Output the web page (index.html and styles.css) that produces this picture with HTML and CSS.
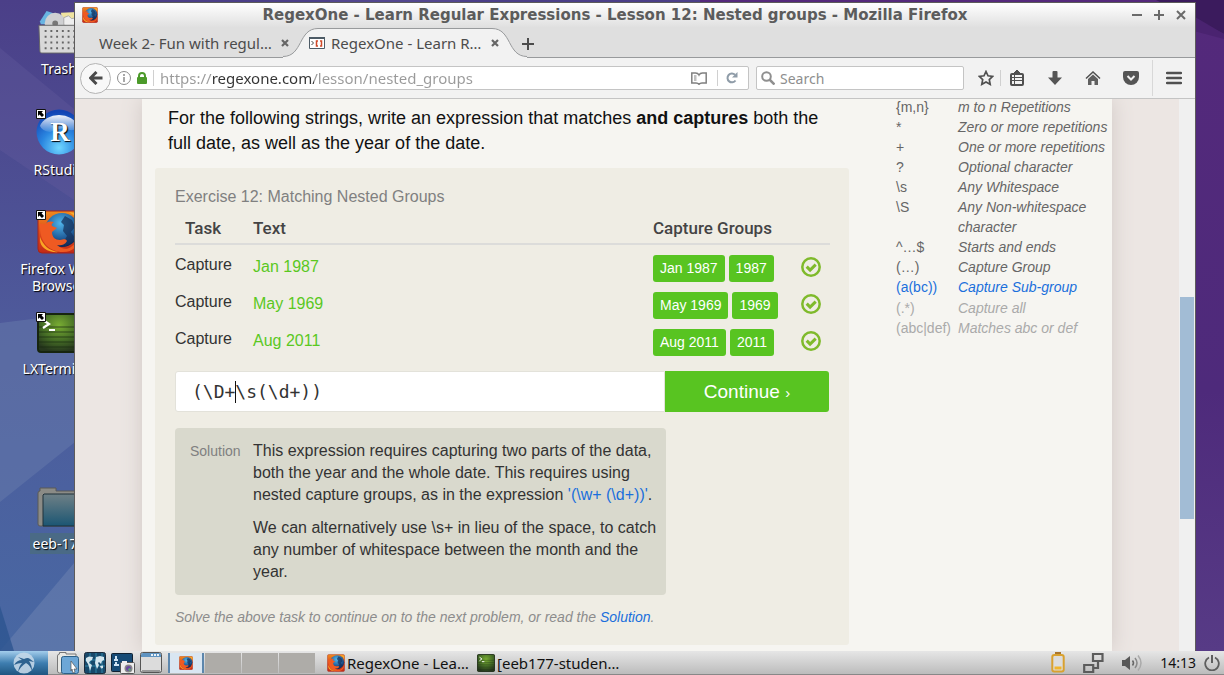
FILE: index.html
```html
<!DOCTYPE html>
<html lang="en">
<head>
<meta charset="utf-8">
<title>RegexOne - Learn Regular Expressions - Lesson 12: Nested groups</title>
<link rel="stylesheet" href="styles.css">
</head>
<body>
<svg class="defs" aria-hidden="true">
  <defs>
    <radialGradient id="globe" cx=".45" cy=".3" r=".7"><stop offset="0" stop-color="#4fb4ea"/><stop offset=".6" stop-color="#23629f"/><stop offset="1" stop-color="#0e2450"/></radialGradient>
    <linearGradient id="fxbg" x1="0" y1="0" x2="0" y2="1"><stop offset="0" stop-color="#f08a1d"/><stop offset=".5" stop-color="#dd4b1b"/><stop offset="1" stop-color="#c22a17"/></linearGradient>
    <radialGradient id="term" cx=".5" cy=".3" r=".7"><stop offset="0" stop-color="#79ad33"/><stop offset=".6" stop-color="#436a25"/><stop offset="1" stop-color="#26361d"/></radialGradient>
    <radialGradient id="rblue" cx=".5" cy=".85" r=".8"><stop offset="0" stop-color="#6fd6ff"/><stop offset=".5" stop-color="#2a86e0"/><stop offset="1" stop-color="#1244b4"/></radialGradient>
    <linearGradient id="gloss" x1="0" y1="0" x2="0" y2="1"><stop offset="0" stop-color="#fff" stop-opacity=".95"/><stop offset="1" stop-color="#fff" stop-opacity=".1"/></linearGradient>
    <linearGradient id="folder" x1="0" y1="0" x2="0" y2="1"><stop offset="0" stop-color="#6f8086"/><stop offset="1" stop-color="#1b5673"/></linearGradient>
    <linearGradient id="wall" x1="0" y1="0" x2="0" y2="1"><stop offset="0" stop-color="#4b3f88"/><stop offset=".5" stop-color="#4e5a9b"/><stop offset="1" stop-color="#4868a3"/></linearGradient>
    <linearGradient id="wall2" x1="0" y1="0" x2="0" y2="1"><stop offset="0" stop-color="#54297b"/><stop offset=".6" stop-color="#4e2a7b"/><stop offset="1" stop-color="#573b86"/></linearGradient>
    <symbol id="firefox" viewBox="0 0 44 44">
      <rect x="1" y="1" width="42" height="42" rx="4" fill="url(#fxbg)" stroke="#a5251a"/>
      <circle cx="25" cy="20" r="17" fill="url(#globe)"/>
      <path d="M28 6l7 4 3 7-4 5 3 5-4 7-5 2-1-5 3-5-4-5 1-6-3-3z" fill="#17335e" opacity=".75"/>
      <path d="M3 14c2-1 3 1 5 0 3-3 6-3 9-2-2 1-3 3-2 4l5 2-5 4c0 5 3 8 8 8 3 0 5-2 7 1-2 4-6 5-10 4 4 4 10 5 14 2 4-3 7-6 8-11 0 10-6 16-16 16-13 0-24-9-23-28z" fill="#ef5a22"/>
      <path d="M3 27c3 8 9 14 19 15-10 1-19-4-19-12z" fill="#f9a524"/>
      <path d="M32 2c5 3 9 7 10 12V4z" fill="#f8ad2c"/>
    </symbol>
    <symbol id="terminal" viewBox="0 0 44 40">
      <rect x="1" y="1" width="42" height="38" rx="3" fill="url(#term)" stroke="#17250f" stroke-width="2"/>
      <path d="M2 14h40M2 19h40M2 24h40M2 29h40M2 34h40" stroke="#182a10" stroke-width="2" opacity=".35"/>
      <path d="M6 7l6 4-6 4M12 17h6" stroke="#fff" stroke-width="2.2" fill="none"/>
    </symbol>
    <symbol id="shortcut" viewBox="0 0 10 10"><path d="M.5.5h9v9h-9z" fill="#fff" stroke="#111"/><path d="M2 2h5L5.600 3.400 8 6 6 8 3.500 5.500 2 7z" fill="#000"/></symbol>
    <symbol id="check" viewBox="0 0 20 20"><circle cx="10" cy="10" r="8.700" fill="none" stroke="#7fba2b" stroke-width="2.500"/><path d="M5.700 9.600l3.400 3.500 5.600-5.500" fill="none" stroke="#7fba2b" stroke-width="3"/></symbol>
    <symbol id="close" viewBox="0 0 8 8"><path d="M1 1l6 6M7 1L1 7" stroke="#666" stroke-width="2.200"/></symbol>
  </defs>
</svg>

<div class="screen">
  <main class="workspace">
    <svg class="wallpaper" viewBox="0 0 1224 651" preserveAspectRatio="none" aria-hidden="true">
      <path d="M0 0h700v651H0z" fill="url(#wall)"/>
      <path d="M700 0h524v651H700z" fill="url(#wall2)"/>
      <path d="M0 48l80 66v90L0 150z" fill="#655c9e" opacity=".35"/>
      <path d="M0 323l80-10v125L0 502z" fill="#6b7fae" opacity=".45"/>
      <path d="M80 556v95H0z" fill="#6b82b0" opacity=".55"/>
      <path d="M0 606l14 45H0z" fill="#2d5590" opacity=".8"/>
      <path d="M1156 0h68v34z" fill="#3b1b5d"/>
      <path d="M1190 30l34 9v-5l-34-20z" fill="#4a2370"/>
      <path d="M330 0h130v3H330z" fill="#53478f"/>
    </svg>

    <a class="shortcut trash" href="#trash">
      <svg width="44" height="44" viewBox="0 0 44 46"><path d="M2 12L9 1l12 4 3 10H3z" fill="#68b4e2"/><path d="M24 3l17-1v14H26z" fill="#efe3a0"/><circle cx="18" cy="14" r="11" fill="#cfd0d2"/><circle cx="18" cy="14" r="3" fill="#777"/><path d="M27 8l5-2 3 3 6-1v10l-6-1-3 3-5-5z" fill="#eee" stroke="#aaa"/><path d="M1 16h42l-1 27q0 2-2 2H4q-2 0-2-2z" fill="#d9d9d9" stroke="#666"/><path d="M7 22h34M7 28h34M7 34h34M7 40h34" stroke="#666" stroke-width="2" stroke-dasharray="2 4"/></svg>
      <span class="label">Trash</span>
    </a>
    <a class="shortcut rstudio" href="#rstudio">
      <svg width="46" height="46" viewBox="0 0 46 46"><circle cx="23" cy="23" r="22.500" fill="url(#rblue)"/><path d="M4 17a20 16 0 0138 0q-3 5-8 4-10-4-20 2-8-1-10-6z" fill="url(#gloss)"/><text class="r-mark" x="24" y="32" text-anchor="middle">R</text></svg>
      <svg class="corner" width="10" height="10"><use href="#shortcut"/></svg>
      <span class="label">RStudio</span>
    </a>
    <a class="shortcut ff" href="#firefox">
      <svg width="44" height="44"><use href="#firefox"/></svg>
      <svg class="corner" width="10" height="10"><use href="#shortcut"/></svg>
      <span class="label">Firefox Web Browser</span>
    </a>
    <a class="shortcut lx" href="#lxterminal">
      <svg width="44" height="42"><use href="#terminal"/></svg>
      <svg class="corner" width="10" height="10"><use href="#shortcut"/></svg>
      <span class="label">LXTerminal</span>
    </a>
    <a class="shortcut dir" href="#eeb-177">
      <svg width="44" height="40" viewBox="0 0 44 40"><path d="M1 6q0-2 2-2V1h16v3h24v35H3q-2 0-2-2z" fill="#8b8b86" stroke="#5b5a57"/><path d="M7 7h36v32H6V8z" fill="url(#folder)" stroke="#1f303a"/></svg>
      <span class="label chosen">eeb-177</span>
    </a>

    <section class="window">
      <header class="titlebar">
        <svg class="app-icon" width="16" height="16"><use href="#firefox"/></svg>
        <h1 class="win-title">RegexOne - Learn Regular Expressions - Lesson 12: Nested groups - Mozilla Firefox</h1>
        <div class="win-buttons">
          <button class="plain" aria-label="Minimize"><svg width="10" height="10"><path d="M0 5h10" stroke="#6a6a6a" stroke-width="2"/></svg></button>
          <button class="plain" aria-label="Maximize"><svg width="10" height="10"><path d="M0 5h10M5 0v10" stroke="#6a6a6a" stroke-width="2"/></svg></button>
          <button class="plain" aria-label="Close window"><svg width="10" height="10"><path d="M1 1l8 8M9 1L1 9" stroke="#6a6a6a" stroke-width="2"/></svg></button>
        </div>
      </header>

      <nav class="tabs">
        <div class="tab">
          <a class="tab-name" href="#week2">Week 2- Fun with regul…</a>
          <button class="plain" aria-label="Close tab"><svg width="8" height="8"><use href="#close"/></svg></button>
        </div>
        <div class="tab active">
          <svg class="tab-shape" viewBox="0 0 244 30" preserveAspectRatio="none"><path d="M0 30V28.500C20 28.500 15 .5 35 .5H209C229 .5 224 28.500 244 28.500V30z" fill="#f2f2f2"/><path d="M0 28.500C20 28.500 15 .5 35 .5H209C229 .5 224 28.500 244 28.500" fill="none" stroke="#989a9c"/></svg>
          <svg class="favicon" width="16" height="12" viewBox="0 0 16 12"><path d="M.5.5h15v11H.5z" fill="#fff" stroke="#4d5b66"/><path d="M0 1h16" stroke="#4d5b66" stroke-width="2"/><path d="M2.500 4l2 2-2 2" fill="none" stroke="#444"/><path d="M9 4H7.500v5H9M11 4h1.500v5H11" fill="none" stroke="#cf4a2a" stroke-width="1.500"/></svg>
          <a class="tab-name" href="#regexone">RegexOne - Learn R…</a>
          <button class="plain" aria-label="Close tab"><svg width="8" height="8"><use href="#close"/></svg></button>
        </div>
        <button class="plain new-tab" aria-label="New tab"><svg width="12" height="12"><path d="M0 6h12M6 0v12" stroke="#4c4c4c" stroke-width="2"/></svg></button>
      </nav>

      <div class="toolbar">
        <button class="back" aria-label="Back"><svg width="14" height="14" viewBox="0 0 14 14"><path d="M13.500 7H2M7.500 1L1.500 7l6 6" fill="none" stroke="#4a4a4a" stroke-width="3"/></svg></button>
        <div class="urlbar">
          <svg width="14" height="14" viewBox="0 0 14 14"><circle cx="7" cy="7" r="6.500" fill="none" stroke="#8c8c8c"/><path d="M7 6v5M7 3v2" stroke="#8c8c8c" stroke-width="1.500"/></svg>
          <svg width="10" height="12" viewBox="0 0 10 12"><path d="M2 6V4a3 3 0 016 0v2" fill="none" stroke="#4c9a2a" stroke-width="2"/><rect y="5" width="10" height="7" rx="1" fill="#4c9a2a"/></svg>
          <i class="rule"></i>
          <input class="url" type="text" aria-label="Address" value="https://regexone.com/lesson/nested_groups">
          <button class="plain" aria-label="Reader view"><svg width="16" height="13" viewBox="0 0 16 13"><path d="M8 3Q7 1 4.500 1H.8v10H5q2 0 3 1.300Q9 11 11 11h4.200V1h-3.700Q9 1 8 3z" fill="none" stroke="#808080" stroke-width="1.500"/><path d="M3 4h2.500M3 6h2.500M3 8h2.500" stroke="#808080"/></svg></button>
          <i class="rule"></i>
          <button class="plain" aria-label="Reload"><svg width="12" height="12" viewBox="0 0 12 12"><path d="M9.500 8.500A4.400 4.400 0 119 2.800" fill="none" stroke="#8f9ca8" stroke-width="2"/><path d="M11.500 0v5.500H6z" fill="#8f9ca8"/></svg></button>
        </div>
        <div class="searchbar">
          <svg width="14" height="14" viewBox="0 0 14 14"><circle cx="5.500" cy="5.500" r="4.300" fill="none" stroke="#8f8f8f" stroke-width="2"/><path d="M8.500 8.500l5 5" stroke="#8f8f8f" stroke-width="2.500"/></svg>
          <input class="search" type="search" aria-label="Search" placeholder="Search">
        </div>
        <div class="tools">
          <button class="plain star" aria-label="Bookmark this page"><svg width="16" height="16" viewBox="0 0 16 16"><path d="M8 1.500l2 4.300 4.700.6-3.400 3.200.9 4.700L8 12l-4.200 2.300.9-4.700L1.300 6.400 6 5.800z" fill="none" stroke="#505050" stroke-width="1.700"/></svg></button>
          <i class="rule"></i>
          <button class="plain" aria-label="Bookmarks"><svg width="14" height="16" viewBox="0 0 14 16"><rect x="1" y="4" width="12" height="11" rx="1" fill="none" stroke="#505050" stroke-width="2"/><path d="M4 3l3-3 3 3zM2 7.500h10M2 10.500h10M4.500 5v9" fill="#505050" stroke="#505050"/></svg></button>
          <button class="plain" aria-label="Downloads"><svg width="14" height="14" viewBox="0 0 14 14"><path d="M4.500 1q0-1 1-1h3q1 0 1 1v5.500H14L7 14 0 6.500h4.500z" fill="#555"/></svg></button>
          <button class="plain" aria-label="Home"><svg width="16" height="14" viewBox="0 0 16 14"><path d="M1 7.500l7-6.500 7 6.500" fill="none" stroke="#505050" stroke-width="1.500"/><path d="M3 8l5-4.600L13 8v6H9.500v-4h-3v4H3z" fill="#606060"/></svg></button>
          <button class="plain" aria-label="Save to Pocket"><svg width="16" height="14" viewBox="0 0 16 14"><path d="M2 0h12q2 0 2 2v4a8 8 0 01-16 0V2q0-2 2-2z" fill="#555"/><path d="M4.500 5L8 8.500 11.500 5" fill="none" stroke="#f2f2f2" stroke-width="2"/></svg></button>
        </div>
        <button class="plain menu" aria-label="Open menu"><svg width="16" height="14" viewBox="0 0 16 14"><path d="M1 2h14M1 7h14M1 12h14" stroke="#505050" stroke-width="2.500" stroke-linecap="round"/></svg></button>
      </div>

      <div class="viewport">
        <div class="page">
          <div class="sheet">
            <article class="lesson">
              <p class="prompt">For the following strings, write an expression that matches <b>and captures</b> both the full date, as well as the year of the date.</p>
              <section class="exercise">
                <h2 class="ex-title">Exercise 12: Matching Nested Groups</h2>
                <table class="tasks">
                  <thead><tr><th class="c-task">Task</th><th class="c-text">Text</th><th class="c-groups">Capture Groups</th><th class="c-check"></th></tr></thead>
                  <tbody>
                    <tr><td class="task">Capture</td><td class="sample">Jan 1987</td><td><div class="badges"><span class="badge">Jan 1987</span><span class="badge">1987</span></div></td><td class="mark"><svg width="20" height="20"><use href="#check"/></svg></td></tr>
                    <tr><td class="task">Capture</td><td class="sample">May 1969</td><td><div class="badges"><span class="badge">May 1969</span><span class="badge">1969</span></div></td><td class="mark"><svg width="20" height="20"><use href="#check"/></svg></td></tr>
                    <tr><td class="task">Capture</td><td class="sample">Aug 2011</td><td><div class="badges"><span class="badge">Aug 2011</span><span class="badge">2011</span></div></td><td class="mark"><svg width="20" height="20"><use href="#check"/></svg></td></tr>
                  </tbody>
                </table>
                <form class="answer">
                  <div class="regex-box">
                    <input class="regex" type="text" aria-label="Regular expression" value="(\D+\s(\d+))">
                    <span class="caret"></span>
                  </div>
                  <button class="continue" type="button">Continue <small>›</small></button>
                </form>
                <div class="solution">
                  <span class="sol-label">Solution</span>
                  <div class="sol-body">
                    <p>This expression requires capturing two parts of the data, both the year and the whole date. This requires using nested capture groups, as in the expression <a href="#expr">'(\w+ (\d+))'</a>.</p>
                    <p>We can alternatively use \s+ in lieu of the space, to catch any number of whitespace between the month and the year.</p>
                  </div>
                </div>
                <p class="hint">Solve the above task to continue on to the next problem, or read the <a href="#solution">Solution</a>.</p>
              </section>
            </article>
            <aside class="notes">
              <table class="ref">
                <tbody>
                  <tr><td>{m,n}</td><td>m to n Repetitions</td></tr>
                  <tr><td>*</td><td>Zero or more repetitions</td></tr>
                  <tr><td>+</td><td>One or more repetitions</td></tr>
                  <tr><td>?</td><td>Optional character</td></tr>
                  <tr><td>\s</td><td>Any Whitespace</td></tr>
                  <tr><td>\S</td><td>Any Non-whitespace character</td></tr>
                  <tr><td>^…$</td><td>Starts and ends</td></tr>
                  <tr><td>(…)</td><td>Capture Group</td></tr>
                  <tr class="current"><td>(a(bc))</td><td>Capture Sub-group</td></tr>
                  <tr class="later"><td>(.*)</td><td>Capture all</td></tr>
                  <tr class="later"><td>(abc|def)</td><td>Matches abc or def</td></tr>
                </tbody>
              </table>
            </aside>
          </div>
        </div>
        <div class="scrollbar"><div class="thumb"></div></div>
      </div>
    </section>
  </main>

  <footer class="taskbar">
    <button class="start" aria-label="Menu"><svg width="22" height="22" viewBox="0 0 22 22"><circle cx="11" cy="11" r="10.500" fill="#c3d7e8" opacity=".9"/><path d="M1 13q3-5 8-5L5 5l6 2q4-2 6 0l4 3-5-1q3 4 3 10-2-6-6-8-5 3-8 9 1-6 4-9-4 0-8 2z" fill="#2d6290"/></svg></button>
    <div class="launchers">
      <button class="plain" aria-label="File manager"><svg width="22" height="22" viewBox="0 0 22 22"><path d="M.5 4q0-2 2-2V.5H9V2h10v4H5v15H2.500q-2 0-2-2z" fill="#e8e8e4" stroke="#777"/><rect x="4.500" y="4.500" width="17" height="17" rx="2" fill="#6da7d6" stroke="#2c6088"/><path d="M14 9l6 8-3 0 1 3-2 1-1-4-1 2z" fill="#fff" stroke="#555" stroke-width=".7"/></svg></button>
      <button class="plain" aria-label="Web browser"><svg width="22" height="22" viewBox="0 0 22 22"><rect x=".5" y=".5" width="21" height="21" rx="2" fill="#17496b" stroke="#1c2b3b"/><path d="M1 14h20M6 1v20M12 1v20M18 1v20M1 8h20" stroke="#2f86a8" stroke-width="1"/><path d="M2 6l3-1.500 4 .5-1 3-2 1-1 2 3 2-1 3-1 3-1-4-1-3-2-3zM12 5l4-1 4 1v3l-2 1-1 3-2-2-1 1 1 2-2 4-1-3-1-3zM16 14l3-.5v2.500l-2 .5z" fill="#d3e6ee"/></svg></button>
      <button class="plain" aria-label="Screenshot"><svg width="24" height="22" viewBox="0 0 24 22"><rect x=".5" y="1.500" width="21" height="18" rx="1" fill="#164b76" stroke="#123"/><path d="M3 8h4M5 4v3M3 13h5M5 10v3" stroke="#cfe4f4" stroke-width="2"/><rect x="9.500" y="10.500" width="14" height="11" rx="1" fill="#eee" stroke="#555"/><path d="M11 9h5v2h-5z" fill="#eee"/><circle cx="17.500" cy="16.500" r="4" fill="#888"/><circle cx="17.500" cy="16.500" r="2.500" fill="#6a4aa0"/><circle cx="18.500" cy="17.500" r="1.200" fill="#59b96b"/></svg></button>
      <button class="plain" aria-label="Show desktop"><svg width="22" height="22" viewBox="0 0 22 22"><rect x=".5" y=".5" width="21" height="20" rx="2" fill="#dcdcdc" stroke="#555"/><path d="M1 5V3q0-2 2-2h16q2 0 2 2v2z" fill="#5e93c1"/><path d="M11 3h9" stroke="#e8f1f8" stroke-width="2" stroke-dasharray="2 1"/><path d="M2 19h18" stroke="#999" stroke-width="2"/></svg></button>
    </div>
    <div class="pager">
      <button class="desk on" aria-label="Desktop 1"><svg width="14" height="14"><use href="#firefox"/></svg></button>
      <button class="desk" aria-label="Desktop 2"></button>
      <button class="desk" aria-label="Desktop 3"></button>
      <button class="desk" aria-label="Desktop 4"></button>
    </div>
    <div class="tasks-list">
      <button class="running"><svg width="18" height="18"><use href="#firefox"/></svg><span>RegexOne - Lea…</span></button>
      <button class="running"><svg width="18" height="18" viewBox="0 0 44 40" preserveAspectRatio="none"><use href="#terminal" width="44" height="40"/></svg><span>[eeb177-studen…</span></button>
    </div>
    <div class="tray">
      <svg width="14" height="21" viewBox="0 0 14 21"><path d="M4 0h6v3H4z" fill="#a9762e"/><rect x="1.300" y="3" width="11.400" height="16.500" rx="2" fill="#ddd" stroke="#d9a12f" stroke-width="2"/><path d="M3.500 14.500h7v3h-7z" fill="#f0b52c"/></svg>
      <svg width="21" height="20" viewBox="0 0 21 20"><path d="M10 1h9.500v7H10zM1.200 12h9v7h-9z" fill="none" stroke="#5c5c5c" stroke-width="2.200"/><path d="M15 8v7h-5" fill="none" stroke="#5c5c5c" stroke-width="2.200"/></svg>
      <svg width="20" height="18" viewBox="0 0 20 18"><path d="M0 6h3l5-4v14l-5-4H0z" fill="#585858"/><path d="M10.500 6.500q2 2.500 0 5" fill="none" stroke="#666" stroke-width="1.500"/><path d="M13 4q4 5 0 10" fill="none" stroke="#888" stroke-width="1.500"/><path d="M16 1.500q6 7.500 0 15" fill="none" stroke="#aaa" stroke-width="1.500"/></svg>
      <time class="clock">14:13</time>
      <button class="plain" aria-label="Power"><svg width="16" height="16" viewBox="0 0 16 16"><path d="M5 2.500a6.800 6.800 0 106 0" fill="none" stroke="#5e5e5e" stroke-width="1.800"/><path d="M8 0v8" stroke="#5e5e5e" stroke-width="2"/></svg></button>
    </div>
  </footer>
</div>
</body>
</html>
```

FILE: styles.css
```css
* { box-sizing: border-box; }
body { margin: 0; font-family: "Liberation Sans", Arial, sans-serif; }
svg { display: block; flex: none; }
p, h1, h2 { margin: 0; }
button, input { font: inherit; color: inherit; }
a { color: #1a6fdc; text-decoration: none; }
.defs { position: absolute; width: 0; height: 0; }
.plain { display: flex; align-items: center; justify-content: center; padding: 0; border: 0; background: none; }
.rule { width: 1px; height: 16px; background: #d0d0d0; }

.screen { display: flex; flex-direction: column; height: 100vh; overflow: hidden; }
.workspace { position: relative; flex: 1; min-height: 0; overflow: hidden; }
.wallpaper { position: absolute; inset: 0; width: 100%; height: 100%; }

/* Desktop shortcuts */
.shortcut { position: absolute; left: 9px; width: 100px; display: flex; flex-direction: column; align-items: center; gap: 6px; color: #fff; text-align: center; font: 14px/17px "Noto Sans", sans-serif; text-shadow: 1px 1px 1px #000; }
.label { padding: 0 3px; }
.chosen { background: #4a6a86; padding: 2px 3px; }
.corner { position: absolute; left: 27px; top: 0; }
.trash { top: 10px; }
.rstudio { top: 109px; }
.ff { top: 210px; }
.lx { top: 312px; }
.dir { top: 487px; }
.r-mark { font: bold 27px "Liberation Serif", serif; fill: #fff; }

/* Browser window */
.window { position: absolute; left: 74px; right: 28px; top: 2px; bottom: 0; display: flex; flex-direction: column; border: 1px solid #5d5b5b; border-bottom: 0; background: #f2f2f2; }
.titlebar { display: flex; align-items: center; height: 24px; padding: 0 9px 0 7px; background: linear-gradient(#fff, #e0e0e0); }
.win-title { flex: 1; text-align: center; color: #5c5c5c; font: bold 15px/24px "DejaVu Sans", sans-serif; white-space: nowrap; }
.win-buttons { display: flex; gap: 12px; }
.tabs { display: flex; height: 31px; padding-left: 24px; background: #dfdfdf; border-bottom: 1px solid #989a9c; font: 15px/26px "Noto Sans", sans-serif; }
.tab { position: relative; display: flex; align-items: center; padding-top: 2px; }
.tab-name { flex: 1; color: #4c4c4c; white-space: nowrap; overflow: hidden; }
.tab .plain { width: 20px; height: 20px; }
.tab .plain, .tab .tab-name, .favicon { position: relative; }
.tab.active { width: 244px; margin: 1px 0 -1px; padding: 0 22px 0 26px; }
.tab:first-child { width: 200px; margin-right: -16px; }
.tab:first-child .tab-name { flex: none; width: 176px; }
.favicon { margin-right: 6px; }
.tab-shape { position: absolute; inset: 0; width: 100%; height: 100%; }
.new-tab { width: 14px; margin: 3px 0 0 -6px; }
.toolbar { display: flex; align-items: center; height: 41px; padding: 0 0 0 5px; border-bottom: 1px solid #c4c4c4; background: #f2f2f2; color: #444; font: 14px/20px "Noto Sans", sans-serif; }
.back { position: relative; z-index: 1; display: flex; align-items: center; justify-content: center; width: 31px; height: 31px; padding: 0; border: 1px solid #b4b4b4; border-radius: 50%; background: #f8f8f8; }
.urlbar { flex: 1; display: flex; align-items: center; gap: 6px; height: 24px; margin-left: -15px; padding: 0 6px 0 20px; border: 1px solid #c4c4c4; border-radius: 2px; background: #fff; }
.urlbar .plain { margin: 0 4px 0 2px; }
.url { flex: 1; min-width: 0; height: 22px; padding: 0; border: 0; color: transparent; font-size: 15px; background: linear-gradient(90deg, #9a9a9a 53px, #333 53px 154px, #9a9a9a 154px); -webkit-background-clip: text; background-clip: text; }
.searchbar { display: flex; align-items: center; gap: 5px; width: 208px; height: 24px; margin-left: 7px; padding: 0 4px; border: 1px solid #c4c4c4; border-radius: 2px; background: #fff; }
.search { flex: 1; min-width: 0; height: 22px; padding: 0; border: 0; background: none; }
.search::placeholder { color: #8e8e8e; opacity: 1; }
.tools { display: flex; align-items: center; gap: 22px; margin-left: 14px; }
.tools .plain { width: 16px; }
.tools .star { margin-right: -16px; }
.tools .rule { margin-right: -14px; }
.menu { height: 36px; width: 43px; margin-left: 13px; border-left: 1px solid #d8d8d8; }

.viewport { display: flex; flex: 1; min-height: 0; overflow: hidden; }
.page { flex: 1; min-width: 0; display: flex; justify-content: center; background: #ece6e3; }
.sheet { display: flex; width: 970px; padding: 7px 0 7px 13px; background: #f6f5f1; box-shadow: 0 0 20px #d0c8c5; }
.lesson { width: 694px; }
.prompt { padding: 0 13px; color: #111; font-size: 18px; line-height: 25px; }
.exercise { margin-top: 12px; padding: 18px 19px 18px 20px; border-radius: 3px; background: #efede4; color: #333; }
.ex-title { color: #808080; font-size: 16px; font-weight: normal; line-height: 22px; }
.tasks { width: 100%; border-collapse: collapse; table-layout: fixed; }
.tasks th { height: 36px; padding: 4px 0 0; border-bottom: 2px solid #dcdcda; color: #444; text-align: left; font: 500 17px/24px Roboto, sans-serif; }
.tasks td { height: 37px; padding: 0; vertical-align: middle; }
.tasks .c-task { width: 78px; padding-right: 22px; text-align: center; }
.c-groups { width: 148px; }
.c-check { width: 29px; }
.tasks .task { padding-top: 3px; font-size: 16px; line-height: 18px; }
.tasks .sample { padding-top: 6px; color: #5ac81f; font-size: 16px; line-height: 18px; }
.tasks .mark { padding-top: 7px; }
.badges { display: flex; gap: 4px; padding-top: 10px; }
.badge { padding: 0 7px; border-radius: 3px; background: #58c421; color: #fff; font-size: 14px; line-height: 27px; white-space: nowrap; }
.answer { display: flex; margin: 15px 1px 0 0; }
.regex-box { position: relative; flex: 1; display: flex; font: 18px "DejaVu Sans Mono", monospace; }
.regex { width: 100%; height: 41px; padding: 0 16px; border: 1px solid #e3e2da; border-radius: 3px 0 0 3px; background: #fff; }
.caret { position: absolute; left: calc(17px + 4ch); top: 10px; width: 1px; height: 22px; background: #111; }
.continue { width: 164px; border: 0; border-radius: 0 3px 3px 0; background: #58c421; color: #fff; font-size: 19px; }
.continue small { font-size: 15px; }
.solution { display: flex; gap: 11px; width: 491px; margin-top: 16px; padding: 12px 8px 12px 15px; border-radius: 4px; background: #d9d9cd; }
.sol-label { flex: none; width: 52px; color: #808080; font-size: 14px; line-height: 22px; }
.sol-body { display: grid; gap: 11px; font-size: 16px; line-height: 22px; }
.hint { margin-top: 12px; color: #8c8c8c; font-size: 14px; font-style: italic; line-height: 20px; }
.notes { flex: 1; margin: -9px 0 0 47px; }
.ref { border-collapse: collapse; color: #666; font-size: 14px; line-height: 20px; }
.ref td { padding: 0; vertical-align: top; white-space: nowrap; }
.ref td:first-child { width: 62px; }
.ref td:last-child { font-style: italic; white-space: normal; }
.ref .current { color: #1a6fdc; }
.ref .current td { padding-bottom: 1px; }
.ref .later { color: #aaa; }
.scrollbar { width: 16px; padding: 198px 1px 0; background: #f0f0f0; }
.thumb { height: 222px; background: #a2bcd5; }

/* Panel */
.taskbar { display: flex; align-items: center; height: 24px; background: linear-gradient(#e6e6e6, #bcbcbc); border-bottom: 1px solid #888; font: 14px/22px "Noto Sans", sans-serif; color: #111; }
.start { display: flex; align-items: center; justify-content: center; width: 48px; height: 24px; padding: 0; border: 0; background: linear-gradient(#a3cdec, #3e7eb0 50%, #1f5580); }
.launchers { display: flex; gap: 5px; margin-left: 9px; }
.pager { display: flex; gap: 1px; margin-left: 6px; }
.desk { display: flex; align-items: center; justify-content: center; width: 36px; height: 20px; padding: 0; border: 0; background: #aeaca8; }
.desk.on { border: solid #5c86ac; border-width: 0 2px; background: #d9e6f2; }
.tasks-list { display: flex; flex: 1; margin-left: 12px; font-size: 15px; }
.running { display: flex; align-items: center; gap: 2px; width: 150px; padding: 0; border: 0; background: none; white-space: nowrap; overflow: hidden; }
.tray { display: flex; align-items: center; gap: 18px; padding-right: 4px; }
.clock { margin-right: -10px; }
```
